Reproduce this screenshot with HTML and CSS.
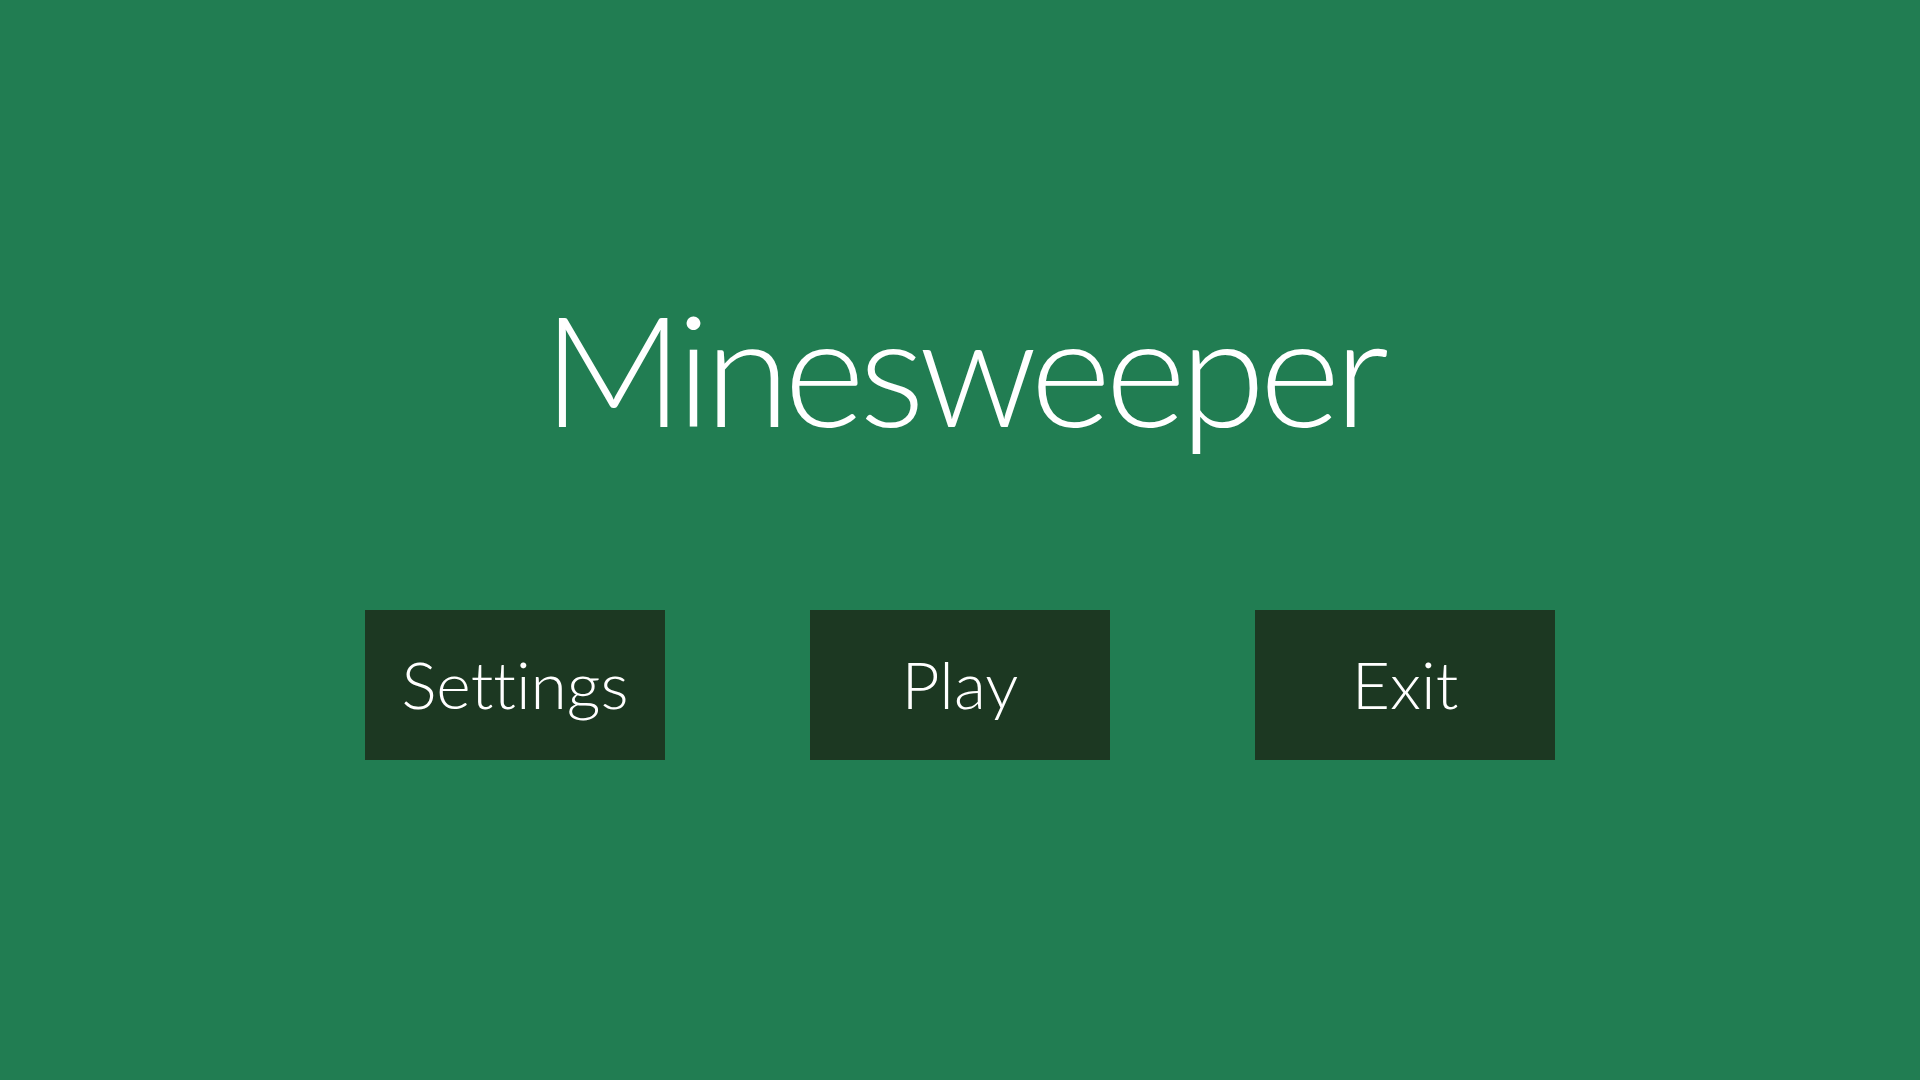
FILE: index.html
```html
<!DOCTYPE html>
<html lang="en">
<head>
<meta charset="utf-8">
<title>Minesweeper</title>
<link rel="stylesheet" href="styles.css">
</head>
<body>
<main class="menu">
  <h1 class="title">Minesweeper</h1>
  <div class="buttons">
    <button class="btn">Settings</button>
    <button class="btn">Play</button>
    <button class="btn">Exit</button>
  </div>
</main>
</body>
</html>
```

FILE: styles.css
```css
html, body {
  margin: 0;
  padding: 0;
  width: 100%;
  height: 100%;
}
body {
  background: #217d52;
  font-family: "Lato", "Noto Sans", sans-serif;
  color: #ffffff;
  font-variant-ligatures: none;
}
.menu {
  display: flex;
  flex-direction: column;
  align-items: center;
  padding-top: 267px;
}
.title {
  margin: 0;
  font-weight: 300;
  font-size: 155px;
  line-height: 200px;
  letter-spacing: -6px;
  padding-left: 6px;
}
.buttons {
  display: flex;
  gap: 145px;
  margin-top: 143px;
}
.btn {
  width: 300px;
  height: 150px;
  background: #1c3822;
  border: none;
  color: #ffffff;
  font-family: "Lato", "Noto Sans", sans-serif;
  font-variant-ligatures: none;
  font-weight: 300;
  font-size: 66px;
  padding: 0 0 4px 0;
  display: flex;
  align-items: center;
  justify-content: center;
}
```
